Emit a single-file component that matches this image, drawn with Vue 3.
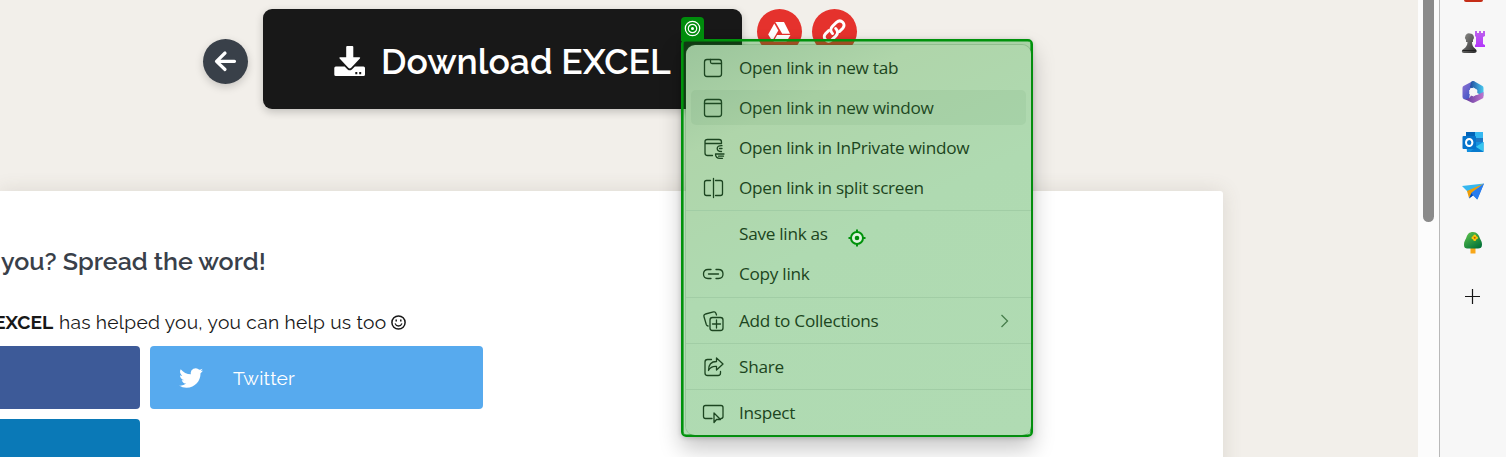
<script setup>
const groups = [
  [
    { label: 'Open link in new tab', icon: 'tab' },
    { label: 'Open link in new window', icon: 'window', hover: true },
    { label: 'Open link in InPrivate window', icon: 'private' },
    { label: 'Open link in split screen', icon: 'split' },
  ],
  [
    { label: 'Save link as', icon: '' },
    { label: 'Copy link', icon: 'link' },
  ],
  [{ label: 'Add to Collections', icon: 'collections', arrow: true }],
  [{ label: 'Share', icon: 'share' }],
  [{ label: 'Inspect', icon: 'inspect' }],
]
</script>

<template>
  <div class="screen">
    <main class="page">
      <div class="actions">
        <button class="round back">
          <svg width="45" height="45" viewBox="0 0 45 45"><path d="M22 14 13.500 22.300 22 30.500M13.500 22.300H31.500" fill="none" stroke="#fff" stroke-width="3.200" stroke-linecap="round" stroke-linejoin="round" /></svg>
        </button>
        <button class="download">
          <svg width="32" height="31" viewBox="0 0 32 31" fill="#fff">
            <path d="M12.200 1Q12.200 0 13.200 0H18.300Q19.300 0 19.300 1V11.200H25.500Q26.800 11.500 25.900 12.500L17.200 21.800Q15.700 23.300 14.300 21.800L5.600 12.500Q4.800 11.500 6 11.200H12.200Z" />
            <path fill-rule="evenodd" d="M1.800 20.500H10.600L13.600 23.400Q15.700 25.200 17.900 23.400L20.900 20.500H29.500Q31 20.500 31 22V28.500Q31 30 29.500 30H1.800Q.3 30 .3 28.500V22Q.3 20.500 1.800 20.500ZM21.300 26V28.200H23.300V26ZM25.200 26V28.200H27.200V26Z" />
          </svg>
          <span>Download EXCEL</span>
        </button>
        <button class="round red">
          <svg width="45" height="45" viewBox="0 0 45 45" fill="#fff">
            <path d="M18.200 13H27L33 24.800H25.200L18.800 13.700Z" />
            <path d="M17.300 14.500 21.300 21.500 15.200 32 11.200 25.500Z" />
            <path d="M20.100 26H33.500L29.500 32.500H16.500Z" />
          </svg>
        </button>
        <button class="round red">
          <svg width="45" height="45" viewBox="0 0 45 45" fill="none" stroke="#fff" stroke-width="3" stroke-linecap="round">
            <path d="M20.500 24.500C17.800 21.900 18.500 19.200 20.500 17.200L24.500 13.300C29 9.500 34.500 15 30.800 19.200L27.500 22.500" />
            <path d="M23.700 19.500C26.500 22.200 25.800 25 23.800 27L19.800 30.800C15.300 34.500 9.800 29 13.500 24.800L16.800 21.500" />
          </svg>
        </button>
      </div>

      <section class="card">
        <h2>you? Spread the word!</h2>
        <p><b>EXCEL</b><span class="thanks">has helped you, you can help us too</span>
          <svg width="15" height="15" viewBox="0 0 15 15" fill="none" stroke="#181818" stroke-width="1.500"><circle cx="7.500" cy="7.500" r="6.600" /><path d="M4.300 8.900C5.300 11.700 9.700 11.700 10.700 8.900" stroke-linecap="round" stroke-width="1.300" /><path d="M5.200 4.500v2M9.800 4.500v2" /></svg>
        </p>
        <div class="shares">
          <button class="facebook"></button>
          <button class="twitter">
            <svg width="24" height="20" viewBox="0 0 24 19.500" fill="#fff"><path d="M24 2.300c-.9.400-1.800.700-2.800.800 1-.6 1.800-1.600 2.200-2.700-1 .6-2 1-3.100 1.200A4.920 4.920 0 0 0 11.900 6.100C7.800 5.900 4.200 3.900 1.700.900.400 3.200 1.100 6 3.200 7.500c-.8 0-1.600-.2-2.200-.6 0 2.300 1.600 4.400 3.900 4.900-.7.200-1.500.2-2.200.1.600 2 2.400 3.400 4.600 3.400A9.900 9.900 0 0 1 0 17.300a14 14 0 0 0 7.500 2.200c9.100 0 14.300-7.700 14-14.600 1-.7 1.800-1.600 2.500-2.600Z" /></svg>
            <span>Twitter</span>
          </button>
          <button class="linkedin"></button>
        </div>
      </section>
    </main>

    <div class="scroll"><div class="thumb"></div></div>

    <aside class="sidebar">
      <div class="tool-end"></div>
      <svg width="24" height="24" viewBox="0 0 24 24">
        <defs>
          <linearGradient id="pawn" x2="1" y2="1"><stop stop-color="#929290" /><stop offset="1" stop-color="#292929" /></linearGradient>
          <linearGradient id="rook" x2="0" y2="1"><stop stop-color="#bd62ed" /><stop offset="1" stop-color="#b335fb" /></linearGradient>
        </defs>
        <path d="M14 1h2v2h2V1h2v2h2V1h2v5l-2 1v7l2 1v2H14v-2l1-1V7l-1-1Z" fill="url(#rook)" />
        <path d="M9 3.500a4 4 0 0 1 3 6.600V12H11c0 3 1 5 3.500 7 1.500 1 2 4-1.500 4H3c-3 0-2.500-3-.5-4C5 17.500 6.500 15 6.500 12H5V10A4 4 0 0 1 9 3.500Z" fill="url(#pawn)" />
        <path d="M1.500 20.500H15" stroke="#222" />
      </svg>
      <svg width="24" height="24" viewBox="0 0 24 24">
        <defs>
          <linearGradient id="m1" y2="1"><stop stop-color="#9672d3" /><stop offset="1" stop-color="#244fc2" /></linearGradient>
          <linearGradient id="m2"><stop stop-color="#234b9d" /><stop offset="1" stop-color="#48c8ef" /></linearGradient>
          <linearGradient id="m3"><stop stop-color="#593799" /><stop offset="1" stop-color="#bf75ce" /></linearGradient>
        </defs>
        <path d="M12 1 2.500 6Q1.500 6.700 1.500 8V17Q1.500 18.500 3 19.200L8 19.500 9 13V9L14 2Z" fill="url(#m1)" />
        <path d="M10 2Q12 .4 14 1.700L21.500 6Q22.500 6.700 22.500 8V16L16 13V10L9 7.500Z" fill="url(#m2)" />
        <path d="M22.500 12V16.500Q22.500 18 21.500 18.500L13.500 22.500Q12 23.300 10.500 22.500L3 18.700Q8 20 10 15.500L16 15Z" fill="url(#m3)" />
        <path d="m12.300 8 3.500 2v4l-3.500 2-3.500-2V10Z" fill="#f7f7f7" stroke="#f7f7f7" stroke-linejoin="round" />
      </svg>
      <svg width="24" height="24" viewBox="0 0 24 24">
        <rect x="5" y="2" width="17" height="17" rx="1" fill="#28a8ea" /><path d="M5 2h9v5H5Z" fill="#0364b8" /><path d="M14 2h8v6h-8Z" fill="#35b8f1" /><path d="M14 8h8v5h-8Z" fill="#1d78c4" />
        <path d="M5 12 22.500 12V22H6Z" fill="#1490df" /><path d="m22.500 12-8 5 8 4.500Z" fill="#37c6ef" /><path d="m15 17 7.500 5H9Z" fill="#087bce" />
        <rect x="1.500" y="6" width="13.500" height="13" rx="1" fill="#0573cb" /><ellipse cx="8.200" cy="12.500" rx="3.200" ry="3.600" fill="none" stroke="#fff" stroke-width="2" />
      </svg>
      <svg width="24" height="24" viewBox="0 0 24 24">
        <path d="M1 6 23 3.500 7.500 12.500Z" fill="#36b7ef" /><path d="m23 3.500-17 7.500 2 7 3-5Z" fill="#ee9e08" /><path d="M23 3.500 10.500 12.800 16 19.500Z" fill="#2c87e9" /><path d="m10.500 13-2.500 5.500 4-3 4.500 4L23 3.500Z" fill="#287cef" /><path d="m8 18.500 2.500-5.500 1.500 2.500Z" fill="#0649b0" />
      </svg>
      <svg class="tree" width="24" height="24" viewBox="0 0 24 24">
        <defs><linearGradient id="leaf" x2=".7" y2="1"><stop stop-color="#63c84e" /><stop offset="1" stop-color="#057438" /></linearGradient></defs>
        <path d="M9.500 15h5v7.500h-5Z" fill="#f8a719" /><path d="M12 1c4 0 6 3 7 6.500 1 2 2 3.500 2 6 0 3-1.500 4-4 4H7c-3 0-4-1-4-4 0-3 1-4 2-6C6.500 3 8 1 12 1Z" fill="url(#leaf)" />
        <g fill="#fac90a"><circle cx="13.700" cy="5" r="1.500" /><circle cx="13.700" cy="8.400" r="1.500" /><circle cx="12" cy="6.700" r="1.500" /><circle cx="15.400" cy="6.700" r="1.500" /></g><circle cx="13.700" cy="6.700" r="1" fill="#bd5500" />
      </svg>
      <svg class="plus" width="24" height="24" viewBox="0 0 24 24"><path d="M4 12.500H19M11.500 5V20" stroke="#161616" stroke-width="1.200" /></svg>
    </aside>

    <div class="highlight">
      <div class="badge">
        <svg width="17" height="17" viewBox="0 0 17 17" fill="none" stroke="#fff" stroke-width="1.200"><circle cx="8.500" cy="8.500" r="7.200" /><circle cx="8.500" cy="8.500" r="4.200" /><circle cx="8.500" cy="8.500" r="1.500" fill="#fff" stroke="none" /></svg>
      </div>
      <div class="menu">
        <div v-for="(group, g) in groups" :key="g" class="group">
          <div v-for="item in group" :key="item.label" class="item" :class="{ hover: item.hover }">
            <svg class="icon" width="24" height="24" viewBox="0 0 24 24">
              <template v-if="item.icon === 'tab'"><rect x="3.500" y="3.500" width="17" height="17" rx="2.500" /><path d="M9.500 3.500V6Q9.500 7.500 11 7.500H20.500" /></template>
              <template v-else-if="item.icon === 'window'"><rect x="3.500" y="3.500" width="17" height="17" rx="2.500" /><path d="M3.500 7.500H20.500" /></template>
              <template v-else-if="item.icon === 'private'"><path d="M11.500 19.500H6.500Q4 19.500 4 17V5.500Q4 3.500 6.500 3.500H18Q20.500 3.500 20.500 6V7.500M4 7.500H20.500M21 9.700Q16.200 9.500 16.200 12.500T20.500 15.500M18.500 12.500H21M23 18H14.500Q14.500 22.300 19 22.300H21.500M17.500 20.200H22.500" /></template>
              <template v-else-if="item.icon === 'split'"><path d="M9.500 4.500H5.500Q3.500 4.500 3.500 6.500V17.500Q3.500 19.500 5.500 19.500H9.500M14.500 4.500H19.500Q21.500 4.500 21.500 6.500V17.500Q21.500 19.500 19.500 19.500H14.500M12.500 2.500V21.500" /></template>
              <template v-else-if="item.icon === 'link'"><path d="M10 7.500H7Q2.500 7.500 2.500 12T7 16.500H10M15 7.500H17.500Q22 7.500 22 12T17.500 16.500H15M7.500 12H17.500" /></template>
              <template v-else-if="item.icon === 'collections'"><rect x="9" y="8.500" width="13" height="13" rx="2.500" /><path d="M15.500 11V19M11.500 15H19.500M15.500 6 14.900 4.200Q14.300 2.400 12.500 2.900L4.500 5Q2.400 5.700 3 7.700L5.300 15.500Q5.700 16.700 7 17" /></template>
              <template v-else-if="item.icon === 'share'"><path d="M10.500 4.500H6.500Q4 4.500 4 7V18Q4 20.500 6.500 20.500H17Q19.500 20.500 19.500 18V16.500M15.500 3 22 9 15.500 15V11.500Q10 11 7.500 15.500Q7.500 6.500 15.500 6.500Z" /></template>
              <template v-else-if="item.icon === 'inspect'"><path d="M11 17.500H4.500Q2.500 17.500 2.500 15.500V6.500Q2.500 4.500 4.500 4.500H20Q22 4.500 22 6.500V15.500Q22 17.500 20 17.500M13 12V21.500L15.500 18.500H19.500Z" /></template>
            </svg>
            <span class="label">{{ item.label }}</span>
            <svg v-if="item.arrow" class="arrow" width="10" height="14" viewBox="0 0 10 14"><path d="m1.500 1 6 6-6 6" /></svg>
          </div>
        </div>
      </div>
      <svg class="aim" width="18" height="18" viewBox="0 0 18 18"><circle cx="9" cy="9" r="6" fill="#ddf2dd" stroke="#00920b" stroke-width="2" /><circle cx="9" cy="9" r="2.300" fill="#008b0a" /><path d="M9 .5V3M9 15v2.500M.5 9H3M15 9h2.500" stroke="#00920b" stroke-width="2" /></svg>
    </div>
  </div>
</template>

<style>
html, body { margin: 0; overflow: hidden; }
</style>

<style scoped>
.screen { position: relative; display: flex; width: 1507px; height: 457px; overflow: hidden; background: #fff; font-family: Raleway, Lato, sans-serif; }
button { border: 0; padding: 0; margin: 0; font: inherit; }
svg { display: block; flex: none; }
.page { width: 1418px; height: 457px; flex: none; overflow: hidden; background: #f2efea; }
.actions { display: flex; align-items: flex-start; height: 100px; padding: 9px 0 82px 203px; }
.round { width: 45px; height: 45px; border-radius: 50%; flex: none; }
.back { margin: 30px 15px 0 0; background: #394049; box-shadow: 0 3px 8px rgba(0, 0, 0, .18); }
.red { margin-left: 15px; background: #e5322d; }
.red + .red { margin-left: 10px; }
.download { display: flex; align-items: center; box-sizing: border-box; width: 479px; height: 100px; padding-left: 71px; border-radius: 9px; background: #181818; color: #fff; box-shadow: 0 3px 8px rgba(0, 0, 0, .2); }
.download svg { margin-top: 4px; }
.download span { margin: 6px 0 0 15px; font-size: 35.500px; font-weight: 600; line-height: 50px; white-space: nowrap; }
.card { box-sizing: border-box; width: 1223px; height: 300px; padding-top: 52px; border-radius: 0 3px 0 0; background: #fff; box-shadow: 0 0 20px rgba(90, 80, 60, .14); }
h2 { margin: 0 0 0 1px; color: #394049; font-size: 25px; font-weight: 600; line-height: 36px; white-space: nowrap; }
p { display: flex; align-items: center; height: 30px; margin: 28px 0 9px -6px; color: #181818; font-size: 19.200px; white-space: nowrap; }
p b { width: 59px; }
.thanks { width: 327px; margin: 0 5px 0 6px; letter-spacing: .260px; }
.shares { display: grid; grid-template-columns: 140px 333px; grid-auto-rows: 63px; gap: 10px; }
.shares button { border-radius: 4px; }
.facebook { background: #3d5a98; }
.twitter { display: flex; align-items: center; padding-left: 29px; background: #57aaee; color: #fff; font-size: 19.200px; letter-spacing: .2px; }
.twitter span { margin: 1px 0 0 30px; }
.linkedin { background: #0a79b7; }
.shares .facebook, .shares .linkedin { border-top-left-radius: 0; border-bottom-left-radius: 0; }
.scroll { display: flex; justify-content: center; width: 21px; background: #fcfcfc; }
.thumb { width: 11px; height: 222px; border-radius: 0 0 6px 6px; background: #8b8b8b; }
.sidebar { display: flex; flex-direction: column; align-items: center; gap: 26px; box-sizing: border-box; width: 67px; border-left: 1px solid #b9b9b9; background: #f7f7f7; }
.tool-end { width: 19px; height: 1.500px; margin-bottom: 2.500px; border-radius: 0 0 2px 2px; background: #c52d17; }
.tree { margin-top: 1px; }
.plus { margin: 3px 0 0; }
.highlight { position: absolute; left: 681px; top: 39px; box-sizing: border-box; width: 352px; height: 398px; border: 2px solid #00920c; border-radius: 5px; background: rgba(0, 143, 10, .3); box-shadow: inset 0 0 0 .6px #00920c, 0 12px 22px rgba(0, 0, 0, .22), 0 1px 5px rgba(0, 0, 0, .18); }
.badge { position: absolute; left: -2px; top: -24px; display: flex; align-items: center; justify-content: center; box-sizing: border-box; width: 23px; height: 24px; padding-bottom: 2px; border-radius: 4px 4px 0 0; background: #008c0c; }
.menu { box-sizing: border-box; width: 345px; height: 390px; margin: 4px 0 0 3px; padding: 3px 0; border-radius: 9px; background: linear-gradient(155deg, #9bc59b 0, #afd5aa 20%, #afdab1 48%, #b0dbb3 100%); box-shadow: 0 0 0 1px rgba(45, 105, 48, .2); font-family: "Segoe UI", "Open Sans", sans-serif; }
.group + .group { margin-top: 2px; padding-top: 3px; border-top: 1px solid #a1cda5; }
.group:nth-child(3) { margin-top: 3px; }
.item { position: relative; display: flex; align-items: center; height: 40px; margin: 0 5px; padding-left: 10px; color: #1c4520; font-size: 17.200px; line-height: 24px; white-space: nowrap; }
.hover::before { content: ""; position: absolute; inset: 2px 0 3px; border-radius: 5px; background: rgba(70, 125, 72, .08); }
.icon { fill: none; stroke: #1c4520; stroke-width: 1.300; stroke-linecap: round; stroke-linejoin: round; }
.label { margin-left: 14px; letter-spacing: -.28px; }
.arrow { margin: -1px 16px 0 auto; fill: none; stroke: #477e4b; stroke-width: 1.300; }
.aim { position: absolute; left: 165px; top: 188px; }
</style>
